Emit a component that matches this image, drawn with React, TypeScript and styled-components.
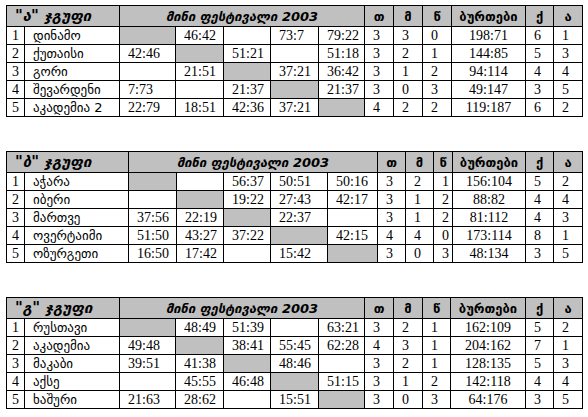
import React from 'react';
import styled, { createGlobalStyle } from 'styled-components';

const GlobalStyle = createGlobalStyle`
  html, body { margin: 0; padding: 0; background: #ffffff; }
  body { font-family: "Liberation Serif", "DejaVu Sans", serif; color: #000; }
`;

type Row = { name: string; scores: (string | null)[]; stats: [string, string, string]; goals: string; pts: string; place: string };
type Group = { letter: string; widths: number[]; rows: Row[] };

const W1 = [18, 95, 56, 48, 47, 48, 46, 29, 29, 29, 74, 28, 29];
const W2 = [18, 104, 48, 47, 47, 57, 50, 28, 28, 19, 73, 28, 29];
const W3 = [18, 95, 56, 48, 47, 48, 46, 29, 29, 28, 75, 28, 29];

const groups: Group[] = [
  {
    letter: 'ა',
    widths: W1,
    rows: [
      { name: 'დინამო', scores: [null, '46:42', '', '73:7', '79:22'], stats: ['3', '3', '0'], goals: '198:71', pts: '6', place: '1' },
      { name: 'ქუთაისი', scores: ['42:46', null, '51:21', '', '51:18'], stats: ['3', '2', '1'], goals: '144:85', pts: '5', place: '3' },
      { name: 'გორი', scores: ['', '21:51', null, '37:21', '36:42'], stats: ['3', '1', '2'], goals: '94:114', pts: '4', place: '4' },
      { name: 'შევარდენი', scores: ['7:73', '', '21:37', null, '21:37'], stats: ['3', '0', '3'], goals: '49:147', pts: '3', place: '5' },
      { name: 'აკადემია 2', scores: ['22:79', '18:51', '42:36', '37:21', null], stats: ['4', '2', '2'], goals: '119:187', pts: '6', place: '2' },
    ],
  },
  {
    letter: 'ბ',
    widths: W2,
    rows: [
      { name: 'აჭარა', scores: [null, '', '56:37', '50:51', '50:16'], stats: ['3', '2', '1'], goals: '156:104', pts: '5', place: '2' },
      { name: 'იბერი', scores: ['', null, '19:22', '27:43', '42:17'], stats: ['3', '1', '2'], goals: '88:82', pts: '4', place: '4' },
      { name: 'მართვე', scores: ['37:56', '22:19', null, '22:37', ''], stats: ['3', '1', '2'], goals: '81:112', pts: '4', place: '3' },
      { name: 'ოვერტაიმი', scores: ['51:50', '43:27', '37:22', null, '42:15'], stats: ['4', '4', '0'], goals: '173:114', pts: '8', place: '1' },
      { name: 'ოზურგეთი', scores: ['16:50', '17:42', '', '15:42', null], stats: ['3', '0', '3'], goals: '48:134', pts: '3', place: '5' },
    ],
  },
  {
    letter: 'გ',
    widths: W3,
    rows: [
      { name: 'რუსთავი', scores: [null, '48:49', '51:39', '', '63:21'], stats: ['3', '2', '1'], goals: '162:109', pts: '5', place: '2' },
      { name: 'აკადემია', scores: ['49:48', null, '38:41', '55:45', '62:28'], stats: ['4', '3', '1'], goals: '204:162', pts: '7', place: '1' },
      { name: 'მაკაბი', scores: ['39:51', '41:38', null, '48:46', ''], stats: ['3', '2', '1'], goals: '128:135', pts: '5', place: '3' },
      { name: 'აქსე', scores: ['', '45:55', '46:48', null, '51:15'], stats: ['3', '1', '2'], goals: '142:118', pts: '4', place: '4' },
      { name: 'ხაშური', scores: ['21:63', '28:62', '', '15:51', null], stats: ['3', '0', '3'], goals: '64:176', pts: '3', place: '5' },
    ],
  },
];

const Page = styled.div`
  display: flex;
  flex-direction: column;
  gap: 34px;
  padding: 5px 0 0 6px;
`;

const Table = styled.table`
  border-collapse: collapse;
  table-layout: fixed;
  width: 577px;
`;

const Col = styled.col<{ $w: number }>`
  width: ${(p) => p.$w}px;
`;

const HeadRow = styled.tr`
  height: 21px;
  background: #c0c0c0;
`;

const BodyRow = styled.tr`
  height: 18px;
`;

const Cell = styled.td<{ $align?: 'left' | 'center'; $gray?: boolean }>`
  border: 1px solid #000;
  padding: 0 0 0 ${(p) => (p.$align === 'center' ? 0 : 8)}px;
  text-align: ${(p) => p.$align ?? 'left'};
  background: ${(p) => (p.$gray ? '#c0c0c0' : 'transparent')};
  font-size: 14px;
  line-height: 16px;
  white-space: nowrap;
  overflow: hidden;
  vertical-align: middle;
`;

const NameCell = styled(Cell)`
  font-family: "DejaVu Sans", sans-serif;
  font-size: 13px;
`;

const GroupTitle = styled.th`
  border: 1px solid #000;
  padding: 0 0 0 8px;
  text-align: left;
  font-family: "DejaVu Sans", sans-serif;
  font-size: 15px;
  font-weight: bold;
  font-style: italic;
  white-space: nowrap;
  overflow: hidden;
`;

const EventTitle = styled.th`
  border: 1px solid #000;
  padding: 0;
  text-align: center;
  font-family: "DejaVu Sans", sans-serif;
  font-size: 13px;
  font-weight: bold;
  font-style: italic;
  white-space: nowrap;
  overflow: hidden;
`;

const Label = styled.th`
  border: 1px solid #000;
  padding: 0;
  text-align: center;
  font-family: "DejaVu Sans", sans-serif;
  font-size: 13px;
  font-weight: bold;
  white-space: nowrap;
  overflow: hidden;
`;

const labels = ['თ', 'მ', 'წ', 'ბურთები', 'ქ', 'ა'];

function GroupTable({ g }: { g: Group }) {
  return (
    <Table>
      <colgroup>
        {g.widths.map((w, i) => (
          <Col key={i} $w={w} />
        ))}
      </colgroup>
      <thead>
        <HeadRow>
          <GroupTitle colSpan={2}>{`"${g.letter}" ჯგუფი`}</GroupTitle>
          <EventTitle colSpan={5}>მინი ფესტივალი 2003</EventTitle>
          {labels.map((l) => (
            <Label key={l}>{l}</Label>
          ))}
        </HeadRow>
      </thead>
      <tbody>
        {g.rows.map((r, i) => (
          <BodyRow key={i}>
            <Cell $align="center">{i + 1}</Cell>
            <NameCell>{r.name}</NameCell>
            {r.scores.map((s, j) => (
              <Cell key={j} $gray={s === null}>
                {s}
              </Cell>
            ))}
            {r.stats.map((s, j) => (
              <Cell key={`s${j}`}>{s}</Cell>
            ))}
            <Cell $align="center">{r.goals}</Cell>
            <Cell>{r.pts}</Cell>
            <Cell>{r.place}</Cell>
          </BodyRow>
        ))}
      </tbody>
    </Table>
  );
}

export default function App() {
  return (
    <>
      <GlobalStyle />
      <Page>
        {groups.map((g) => (
          <GroupTable key={g.letter} g={g} />
        ))}
      </Page>
    </>
  );
}
